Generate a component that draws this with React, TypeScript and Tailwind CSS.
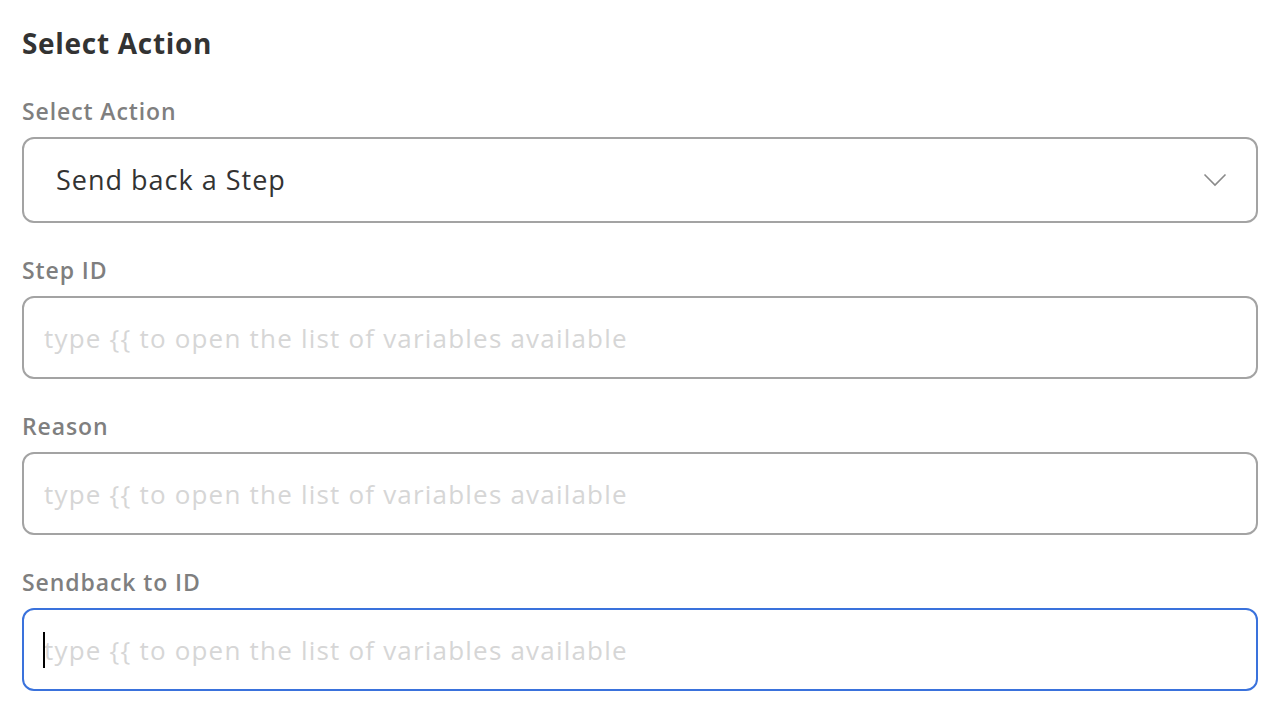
import React from 'react';

const font = { fontFamily: '"Open Sans", "Noto Sans", sans-serif' };

const labelClass = "block text-[23px] font-semibold leading-[32px] tracking-[0.9px] text-[#7f7f7f]";
const boxClass = "w-full h-[83px] rounded-[12px] border-2 bg-white px-[20px] text-[26px] font-medium tracking-[1.2px] outline-none";
const placeholderText = 'type {{ to open the list of variables available';

const Field: React.FC<{ label: string; focused?: boolean }> = ({ label, focused }) => (
  <div className="flex flex-col gap-[10px]">
    <label className={labelClass}>{label}</label>
    <div className="relative">
      <input
        type="text"
        placeholder={placeholderText}
        className={`${boxClass} placeholder:text-[#d6d6d6] ${focused ? 'border-[#3a72dc]' : 'border-[#a3a3a3]'}`}
      />
      {/* fake caret */}
      {focused && <span className="absolute left-[21px] top-[24px] h-[36px] w-[2px] bg-black" />}
    </div>
  </div>
);

export default function App() {
  return (
    <div className="min-h-screen bg-white pl-[22px] pr-[20px] pt-[24px]" style={font}>
      <h1 className="text-[28px] font-bold leading-[38px] tracking-[0.7px] text-[#333333]">Select Action</h1>

      <div className="mt-[33px] flex flex-col gap-[31px]">
        <div className="flex flex-col gap-[10px]">
          <label className={labelClass}>Select Action</label>
          <div className="flex h-[86px] items-center justify-between rounded-[12px] border-2 border-[#a3a3a3] pl-[32px] pr-[29px]">
            <span className="text-[27px] font-medium tracking-[1px] text-[#333333]">Send back a Step</span>
            <svg width="24" height="14" viewBox="0 0 24 14" fill="none" stroke="#8a8a8a" strokeWidth="1.6">
              <path d="M1.5 1.5 12 12 22.5 1.5" />
            </svg>
          </div>
        </div>
        <Field label="Step ID" />
        <Field label="Reason" />
        <Field label="Sendback to ID" focused />
      </div>
    </div>
  );
}
